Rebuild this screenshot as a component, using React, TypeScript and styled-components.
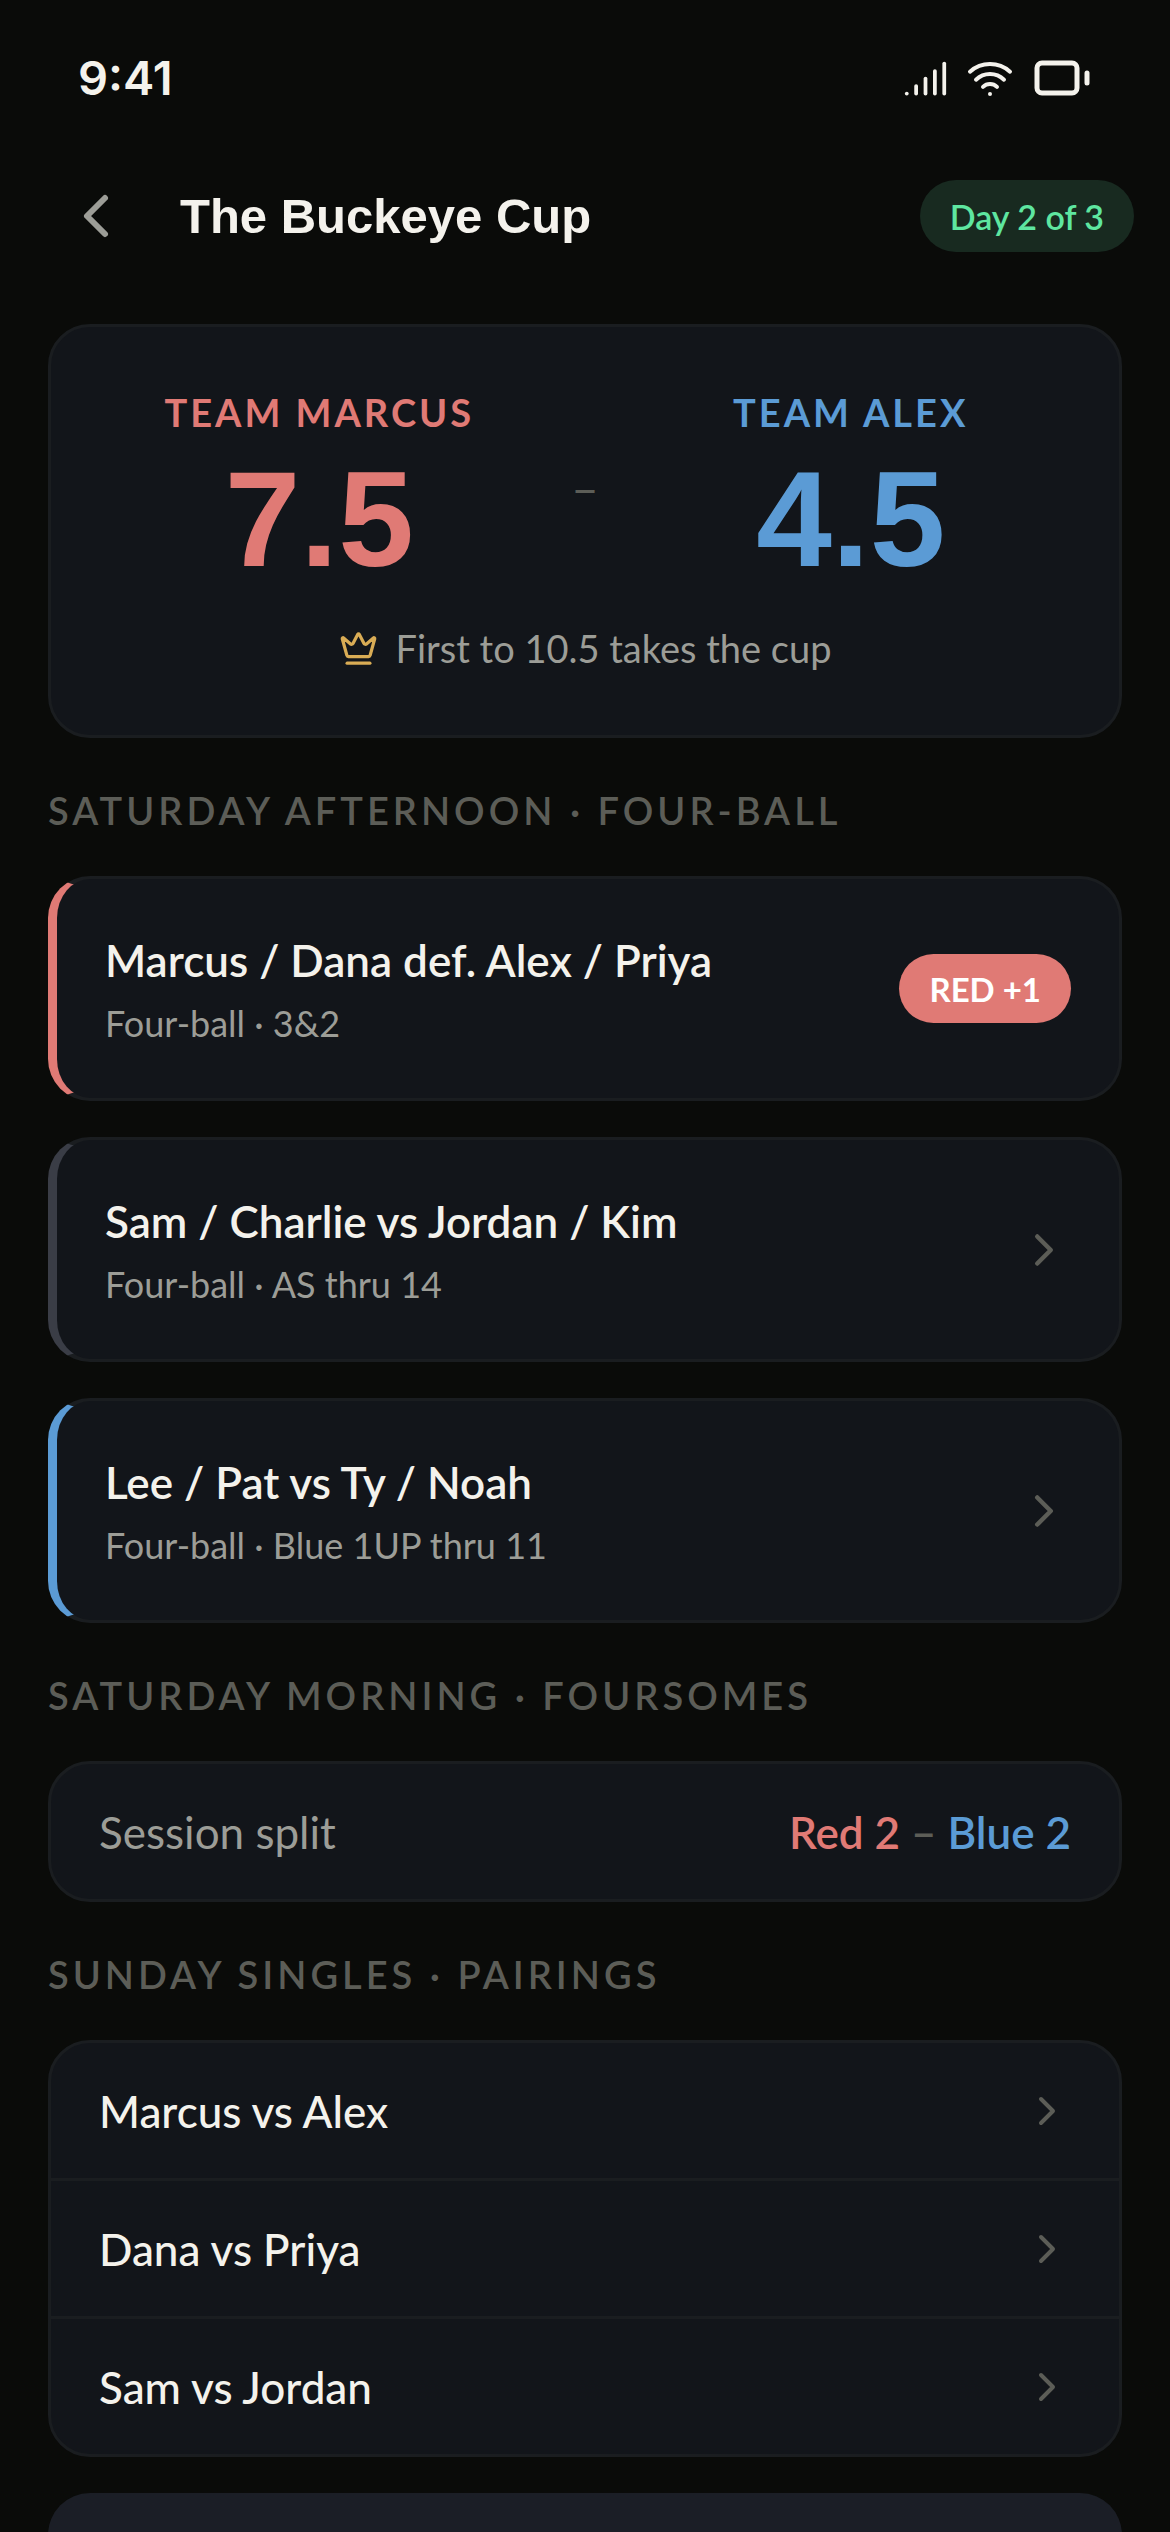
import React from "react";
import styled, { createGlobalStyle } from "styled-components";
import { Signal, Wifi, Battery, ChevronLeft, ChevronRight, Crown } from "lucide-react";

const color = {
  page: "#0a0b09",
  card: "#12151a",
  raised: "#1b1e26",
  line: "#1a1d20",
  text: "#f4f2ec",
  muted: "#9c9d97",
  faint: "#5c5d57",
  red: "#e07a75",
  blue: "#5b9bd5",
  neutral: "#3a3d46",
  green: "#5ee6a0",
  greenTint: "#182a20",
  gold: "#d9ac55",
};

const sans = `Lato, "Liberation Sans", sans-serif`;
const display = `"Liberation Sans", Arial, sans-serif`;
const numeric = `Inter, "Liberation Sans", sans-serif`;

const GlobalStyle = createGlobalStyle`
  * { box-sizing: border-box; margin: 0; }
  body { margin: 0; background: ${color.page}; color: ${color.text}; font-family: ${sans}; }
  button { font: inherit; color: inherit; border: 0; background: none; text-align: left; cursor: pointer; }
`;

const Screen = styled.div`
  height: 100vh;
  display: flex;
  flex-direction: column;
  overflow: hidden;
`;

const StatusBar = styled.div`
  display: flex;
  align-items: center;
  justify-content: space-between;
  height: 156px;
  padding: 0 78px;
  flex: none;
`;

const Clock = styled.time`
  font-family: ${numeric};
  font-size: 47px;
  line-height: 60px;
  font-weight: 600;
`;

const StatusIcons = styled.div`
  display: flex;
  align-items: center;
  gap: 18px;
`;

const Header = styled.header`
  display: flex;
  align-items: center;
  gap: 48px;
  height: 120px;
  padding: 0 36px 0 60px;
  flex: none;
`;

const BackButton = styled.button`
  display: flex;
  padding: 0;
  && { color: ${color.muted}; }
`;

const Title = styled.h1`
  flex: 1;
  font-family: ${display};
  font-size: 49px;
  line-height: 60px;
  font-weight: 700;
`;

const DayPill = styled.span`
  display: flex;
  align-items: center;
  height: 72px;
  padding: 0 30px;
  border-radius: 36px;
  background: ${color.greenTint};
  color: ${color.green};
  font-size: 34px;
  font-weight: 600;
`;

const Content = styled.main`
  flex: 1;
  min-height: 0;
  overflow-y: auto;
  scrollbar-width: none;
  padding: 48px 48px 0;
`;

const Card = styled.section`
  border: 3px solid ${color.line};
  border-radius: 42px;
  background: ${color.card};
`;

const ScoreCard = styled(Card)`
  padding: 60px 48px;
`;

const Scores = styled.div`
  display: flex;
  align-items: center;
`;

const Team = styled.div<{ $tone: string }>`
  flex: 1;
  text-align: center;
  color: ${(p) => p.$tone};
`;

const TeamName = styled.h2`
  font-size: 38px;
  line-height: 51px;
  font-weight: 700;
  letter-spacing: 3px;
`;

const Points = styled.p`
  margin-top: 15px;
  font-family: ${display};
  font-size: 136px;
  line-height: 132px;
  font-weight: 700;
`;

const Dash = styled.span`
  padding: 6px 36px 0;
  color: ${color.faint};
  font-family: ${numeric};
  font-size: 38px;
`;

const Target = styled.p`
  display: flex;
  align-items: center;
  justify-content: center;
  gap: 18px;
  margin-top: 36px;
  color: ${color.muted};
  font-size: 38px;
  line-height: 54px;
`;

const SectionTitle = styled.h2`
  padding: 48px 0 42px;
  color: ${color.faint};
  font-size: 38px;
  line-height: 48px;
  font-weight: 600;
  letter-spacing: 4px;
`;

const Matches = styled.div`
  display: grid;
  gap: 36px;
`;

const MatchCard = styled.button<{ $tone: string }>`
  && {
    display: flex;
    align-items: center;
    justify-content: space-between;
    width: 100%;
    padding: 51px 48px;
    border: 3px solid ${color.line};
    border-left: 9px solid ${(p) => p.$tone};
    border-radius: 42px;
    background: ${color.card};
  }
`;

const MatchText = styled.span`
  display: grid;
  gap: 9px;
`;

const Players = styled.span`
  font-size: 44px;
  line-height: 60px;
  font-weight: 600;
`;

const Detail = styled.span`
  color: ${color.muted};
  font-size: 36px;
  line-height: 48px;
`;

const ResultPill = styled.span`
  display: flex;
  align-items: center;
  height: 69px;
  padding: 0 30px;
  border-radius: 35px;
  background: ${color.red};
  color: #fff;
  font-size: 33px;
  font-weight: 700;
`;

const Row = styled.div`
  display: flex;
  align-items: center;
  justify-content: space-between;
  height: 135px;
  padding: 0 48px;
  font-size: 44px;
`;

const RowLabel = styled.span`
  color: ${color.muted};
`;

const Split = styled.span`
  font-weight: 600;
  color: ${color.faint};
`;

const Tone = styled.span<{ $tone: string }>`
  color: ${(p) => p.$tone};
`;

const PairingRow = styled(Row).attrs({ as: "button" })`
  && {
    width: 100%;
    font-size: 44px;
    font-weight: 500;
  }
  & + & {
    height: 138px;
    border-top: 3px solid ${color.line};
  }
`;

const ActionButton = styled.button`
  && {
    display: block;
    width: 100%;
    height: 156px;
    margin-top: 36px;
    border-radius: 42px;
    background: ${color.raised};
  }
`;

const matches = [
  { players: "Marcus / Dana def. Alex / Priya", detail: "Four-ball · 3&2", tone: color.red, result: "RED +1" },
  { players: "Sam / Charlie vs Jordan / Kim", detail: "Four-ball · AS thru 14", tone: color.neutral },
  { players: "Lee / Pat vs Ty / Noah", detail: "Four-ball · Blue 1UP thru 11", tone: color.blue },
];

const pairings = ["Marcus vs Alex", "Dana vs Priya", "Sam vs Jordan"];

export default function App() {
  return (
    <Screen>
      <GlobalStyle />
      <StatusBar>
        <Clock>9:41</Clock>
        <StatusIcons>
          <Signal size={45} />
          <Wifi size={48} />
          <Battery size={60} />
        </StatusIcons>
      </StatusBar>
      <Header>
        <BackButton aria-label="Back">
          <ChevronLeft size={72} />
        </BackButton>
        <Title>The Buckeye Cup</Title>
        <DayPill>Day 2 of 3</DayPill>
      </Header>
      <Content>
        <ScoreCard>
          <Scores>
            <Team $tone={color.red}>
              <TeamName>TEAM MARCUS</TeamName>
              <Points>7.5</Points>
            </Team>
            <Dash>–</Dash>
            <Team $tone={color.blue}>
              <TeamName>TEAM ALEX</TeamName>
              <Points>4.5</Points>
            </Team>
          </Scores>
          <Target>
            <Crown size={39} color={color.gold} />
            First to 10.5 takes the cup
          </Target>
        </ScoreCard>

        <SectionTitle>SATURDAY AFTERNOON · FOUR-BALL</SectionTitle>
        <Matches>
          {matches.map((m) => (
            <MatchCard key={m.players} $tone={m.tone}>
              <MatchText>
                <Players>{m.players}</Players>
                <Detail>{m.detail}</Detail>
              </MatchText>
              {m.result ? <ResultPill>{m.result}</ResultPill> : <ChevronRight size={54} color={color.faint} />}
            </MatchCard>
          ))}
        </Matches>

        <SectionTitle>SATURDAY MORNING · FOURSOMES</SectionTitle>
        <Card>
          <Row>
            <RowLabel>Session split</RowLabel>
            <Split>
              <Tone $tone={color.red}>Red 2</Tone> – <Tone $tone={color.blue}>Blue 2</Tone>
            </Split>
          </Row>
        </Card>

        <SectionTitle>SUNDAY SINGLES · PAIRINGS</SectionTitle>
        <Card>
          {pairings.map((p) => (
            <PairingRow key={p}>
              {p}
              <ChevronRight size={48} color={color.faint} />
            </PairingRow>
          ))}
        </Card>
        <ActionButton aria-label="More" />
      </Content>
    </Screen>
  );
}
